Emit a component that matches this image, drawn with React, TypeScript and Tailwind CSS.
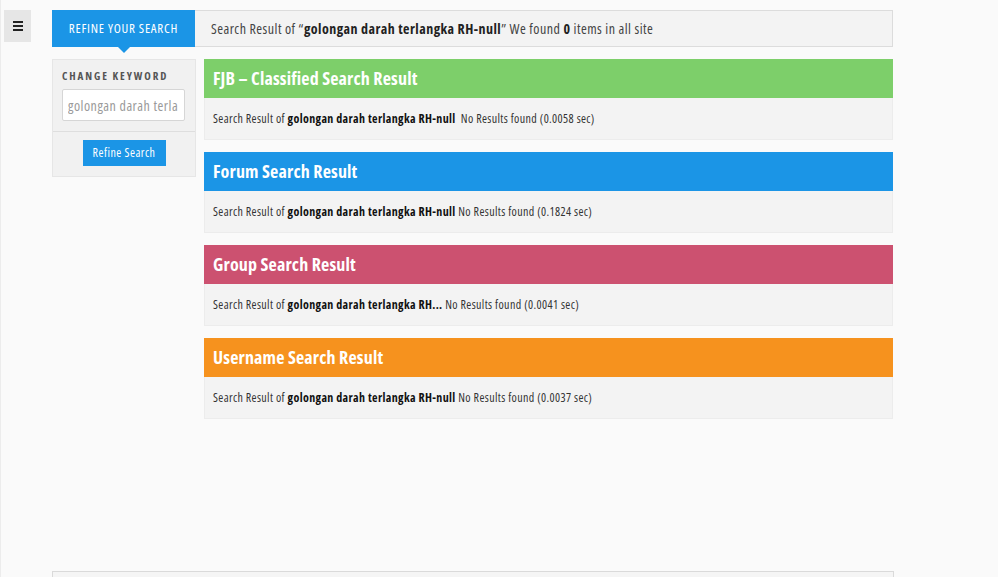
import React from "react";

const cards = [
  { title: "FJB – Classified Search Result", color: "bg-[#7dcf6a]", q: "golongan darah terlangka RH-null", time: "0.0058", extraSpace: true },
  { title: "Forum Search Result", color: "bg-[#1b95e6]", q: "golongan darah terlangka RH-null", time: "0.1824" },
  { title: "Group Search Result", color: "bg-[#cc5170]", q: "golongan darah terlangka RH...", time: "0.0041" },
  { title: "Username Search Result", color: "bg-[#f6921e]", q: "golongan darah terlangka RH-null", time: "0.0037" },
];

export default function App() {
  return (
    <div
      className="w-[998px] h-[577px] overflow-hidden bg-[#fafafa] border-l border-[#ececec] relative [font-stretch:87%]"
      style={{ fontFamily: '"Open Sans", "Noto Sans", sans-serif' }}
    >
      <div className="flex pt-[10px]">
        <div className="w-[51px] pl-[3px]">
          <div className="w-[27px] h-[32px] bg-[#e6e6e6] flex items-center justify-center">
            <div className="flex flex-col gap-[2px]">
              <span className="block w-[10px] h-[2px] bg-[#222]" />
              <span className="block w-[10px] h-[2px] bg-[#222]" />
              <span className="block w-[10px] h-[2px] bg-[#222]" />
            </div>
          </div>
        </div>
        <div className="w-[841px] flex flex-col">
          {/* top bar */}
          <div className="flex h-[37px] border border-[#dcdcdc] bg-[#f3f3f3]">
            <div className="relative w-[143px] -my-px -ml-px bg-[#1b95e6] text-white text-[13px] tracking-[0.75px] flex items-center justify-center">
              REFINE YOUR SEARCH
              <span className="absolute left-1/2 -translate-x-1/2 top-full w-0 h-0 border-l-[6px] border-r-[6px] border-t-[6px] border-l-transparent border-r-transparent border-t-[#1b95e6]" />
            </div>
            <div className="flex items-center pl-[16px] text-[14px] text-[#444] tracking-[0.47px]">
              <span>
                Search Result of “<b className="text-[#222]">golongan darah terlangka RH-null</b>” We found <b className="text-[#222]">0</b> items in all site
              </span>
            </div>
          </div>
          <div className="flex mt-[12px] gap-[8px]">
            {/* sidebar */}
            <div className="w-[144px] self-start bg-[#f1f1f1] border border-[#e6e6e6]">
              <div className="pl-[9px] pr-[10px] pt-[9px] pb-[10px] border-b border-[#dedede]">
                <div className="text-[11px] font-bold tracking-[1.9px] text-[#555] leading-[14px] whitespace-nowrap">CHANGE KEYWORD</div>
                <div className="mt-[6px] h-[32px] bg-white border border-[#d6d6d6] rounded-[2px] flex items-center px-[5px] text-[14px] text-[#9a9a9a] tracking-[0.5px] overflow-hidden whitespace-nowrap">
                  <span className="block overflow-hidden">golongan darah terla</span>
                </div>
              </div>
              <div className="flex justify-center pt-[8px] pb-[10px]">
                <div className="bg-[#1b95e6] text-white text-[12px] tracking-[0.5px] h-[26px] w-[83px] flex items-center justify-center">Refine Search</div>
              </div>
            </div>
            {/* results */}
            <div className="flex-1 flex flex-col gap-[12px]">
              {cards.map((c) => (
                <div key={c.title}>
                  <div className={`${c.color} h-[39px] flex items-center px-[9px] text-white font-bold text-[18px] tracking-[0.15px]`}>{c.title}</div>
                  <div className="bg-[#f3f3f3] h-[42px] flex items-center pl-[8px] text-[12px] text-[#333] tracking-[0.37px] border-x border-b border-[#ececec]">
                    <span>
                      Search Result of <b className="text-[#111]">{c.q}</b>{c.extraSpace ? "\u00a0 " : " "}No Results found ({c.time} sec)
                    </span>
                  </div>
                </div>
              ))}
            </div>
          </div>
        </div>
      </div>
      <div className="absolute left-[51px] top-[571px] w-[842px] h-[10px] border border-[#dadada] bg-[#f5f5f5]" />
    </div>
  );
}
